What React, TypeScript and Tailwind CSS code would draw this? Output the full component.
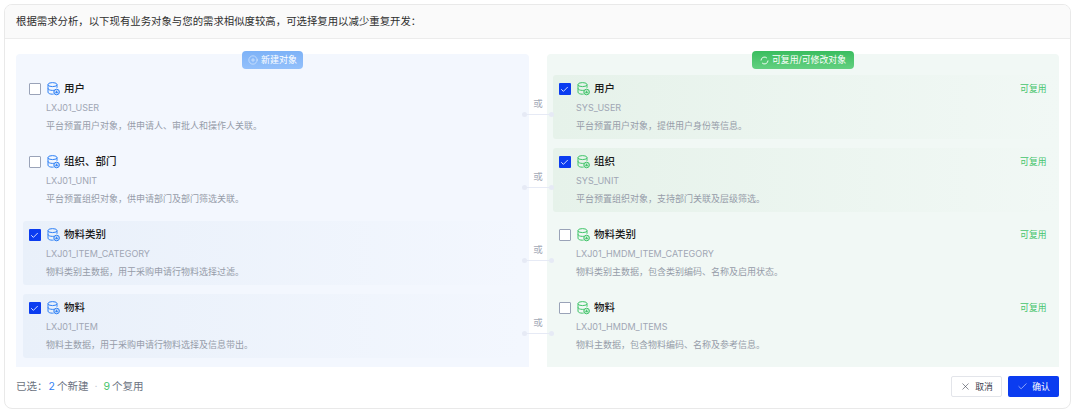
import React from "react";
import { Check, X, CirclePlus } from "lucide-react";

const font = { fontFamily: '"Inter","Noto Sans CJK SC",sans-serif' };

function Db({ color }: { color: string }) {
  return (
    <svg width="13" height="14" viewBox="0 0 13 14" fill="none" stroke={color} strokeWidth="1">
      <ellipse cx="5.5" cy="2.6" rx="4.5" ry="2" />
      <path d="M1 2.6v7.6c0 1.1 2 2 4.5 2 .4 0 .8 0 1.1-.1" />
      <path d="M10 2.6v3.2" />
      <path d="M1 6.4c0 1.1 2 2 4.5 2 .5 0 1-.1 1.4-.1" />
      <circle cx="9.6" cy="10" r="2.8" fill={color} fillOpacity="0.25" />
      <path d="M8.4 10.6h2.4M9.6 8.8v1.8" />
    </svg>
  );
}

function Ring() {
  return (
    <svg width="9" height="9" viewBox="0 0 9 9" fill="none" stroke="white" strokeWidth="0.9">
      <path d="M1 4.5A3.5 3.5 0 0 1 6.9 2" />
      <path d="M8 4.5A3.5 3.5 0 0 1 2.1 7" />
    </svg>
  );
}

function Box({ on }: { on: boolean }) {
  return on ? (
    <span className="flex h-[12.5px] w-[12.5px] shrink-0 items-center justify-center rounded-[1px] bg-[#0b3cf0]">
      <Check size={9} strokeWidth={2.2} className="text-white" />
    </span>
  ) : (
    <span className="h-[12.5px] w-[12.5px] shrink-0 rounded-[1px] border border-[#9aa3b8] bg-white" />
  );
}

type Row = { name: string; code: string; desc: string; on: boolean };

const left: Row[] = [
  { name: "用户", code: "LXJ01_USER", desc: "平台预置用户对象，供申请人、审批人和操作人关联。", on: false },
  { name: "组织、部门", code: "LXJ01_UNIT", desc: "平台预置组织对象，供申请部门及部门筛选关联。", on: false },
  { name: "物料类别", code: "LXJ01_ITEM_CATEGORY", desc: "物料类别主数据，用于采购申请行物料选择过滤。", on: true },
  { name: "物料", code: "LXJ01_ITEM", desc: "物料主数据，用于采购申请行物料选择及信息带出。", on: true },
];
const right: Row[] = [
  { name: "用户", code: "SYS_USER", desc: "平台预置用户对象，提供用户身份等信息。", on: true },
  { name: "组织", code: "SYS_UNIT", desc: "平台预置组织对象，支持部门关联及层级筛选。", on: true },
  { name: "物料类别", code: "LXJ01_HMDM_ITEM_CATEGORY", desc: "物料类别主数据，包含类别编码、名称及启用状态。", on: false },
  { name: "物料", code: "LXJ01_HMDM_ITEMS", desc: "物料主数据，包含物料编码、名称及参考信息。", on: false },
];

function Item({ r, green }: { r: Row; green?: boolean }) {
  const bg = r.on
    ? green
      ? "bg-gradient-to-r from-[#e6f2ea] to-[#f1f8f5]"
      : "bg-gradient-to-r from-[#e9f0fa] to-[#f3f7fe]"
    : "";
  return (
    <div className={`flex h-[64px] flex-col rounded-[3px] px-[5.5px] pt-[8px] ${bg}`}>
      <div className="flex h-[12px] items-center">
        <Box on={r.on} />
        <span className="ml-[6px] mr-[4px] flex"><Db color={green ? "#3fc468" : "#2f80f5"} /></span>
        <span className="mt-[1px] text-[10.5px] font-medium leading-none text-[#1a1a1a]">{r.name}</span>
        {green && <span className="ml-auto mr-[7px] text-[8.8px] leading-none text-[#45c46c]">可复用</span>}
      </div>
      <div className="ml-[17.5px] mt-[7px] h-[12px] text-[9px] leading-[12px] text-[#a0a6b4]">{r.code}</div>
      <div className="ml-[17.5px] mt-[6px] text-[9px] leading-[12px] text-[#969ca9]">{r.desc}</div>
    </div>
  );
}

function Connector({ top }: { top: number }) {
  return (
    <div className="absolute left-[-6px] w-[30px]" style={{ top }}>
      <div className="text-center text-[9.5px] leading-[12px] text-[#a3a9b6]">或</div>
      <div className="relative mt-[4px] h-[1px] bg-[#e6eaf5]">
        <span className="absolute left-[-1px] top-[-2px] h-[5px] w-[5px] rounded-full bg-[#e6eaf5]" />
        <span className="absolute right-[-1px] top-[-2px] h-[5px] w-[5px] rounded-full bg-[#e6eaf5]" />
      </div>
    </div>
  );
}

export default function App() {
  return (
    <div style={font} className="h-[418px] w-[1080px] bg-white pl-[4px] pr-[9px] pt-[4px]">
      <div className="h-[405px] overflow-hidden rounded-[8px] border border-[#e9e9e9] bg-white">
        <div className="flex h-[34px] items-center border-b border-[#ececec] bg-[#fafafa] pl-[11px] text-[10.4px] text-[#2e2e2e]">
          根据需求分析，以下现有业务对象与您的需求相似度较高，可选择复用以减少重复开发：
        </div>
        <div className="flex gap-[18px] pl-[11px] pr-[11px] pt-[15px]">
          <div className="relative h-[313px] w-[513px] rounded-t-[4px] bg-[#f3f7fe] pl-[7px] pr-[7px] pt-[21px]">
            <div className="absolute left-[226px] top-[-3px] flex h-[18px] w-[61px] items-center justify-center gap-[3px] rounded-[4px] bg-gradient-to-b from-[#7db2f7] to-[#93c0fb] text-[9px] text-white">
              <CirclePlus size={10} strokeWidth={1.1} />
              新建对象
            </div>
            <div className="flex flex-col gap-[9px]">
              {left.map((r) => <Item key={r.code} r={r} />)}
            </div>
          </div>
          <div className="relative h-[313px] w-[512px] rounded-t-[4px] bg-[#f1f8f5] pl-[6px] pt-[21px]">
            <div className="absolute left-[205px] top-[-3px] flex h-[18px] w-[102px] items-center justify-center gap-[3px] rounded-[4px] bg-gradient-to-b from-[#39bd5f] to-[#62d080] text-[8.9px] text-white">
              <Ring />
              可复用/可修改对象
            </div>
            <div className="flex flex-col gap-[9px]">
              {right.map((r) => <Item key={r.code} r={r} green />)}
            </div>
            <div className="absolute left-[-18px] top-0 h-full w-[18px]">
              <Connector top={44} />
              <Connector top={117} />
              <Connector top={190} />
              <Connector top={263} />
            </div>
          </div>
        </div>
        <div className="flex items-start justify-between pl-[11px] pr-[11px] pt-[9px]">
          <div className="flex h-[21px] items-center text-[10.5px] text-[#6b7280]">
            <span>已选：</span>
            <span className="ml-[1px] text-[#2f80f5]">2</span>
            <span className="ml-[2px]">个新建</span>
            <span className="mx-[6px] text-[#c5c9d2]">·</span>
            <span className="text-[#45c46c]">9</span>
            <span className="ml-[2px]">个复用</span>
          </div>
          <div className="flex gap-[6px]">
            <button className="flex h-[21px] w-[51px] items-center justify-center gap-[4px] rounded-[2px] border border-[#e3e5ea] bg-white text-[8.8px] text-[#3c4250]">
              <X size={11} strokeWidth={1.3} />
              取消
            </button>
            <button className="flex h-[21px] w-[51px] items-center justify-center gap-[4px] rounded-[2px] bg-[#0b3cf0] text-[8.8px] text-white">
              <Check size={11} strokeWidth={1.2} />
              确认
            </button>
          </div>
        </div>
      </div>
    </div>
  );
}
